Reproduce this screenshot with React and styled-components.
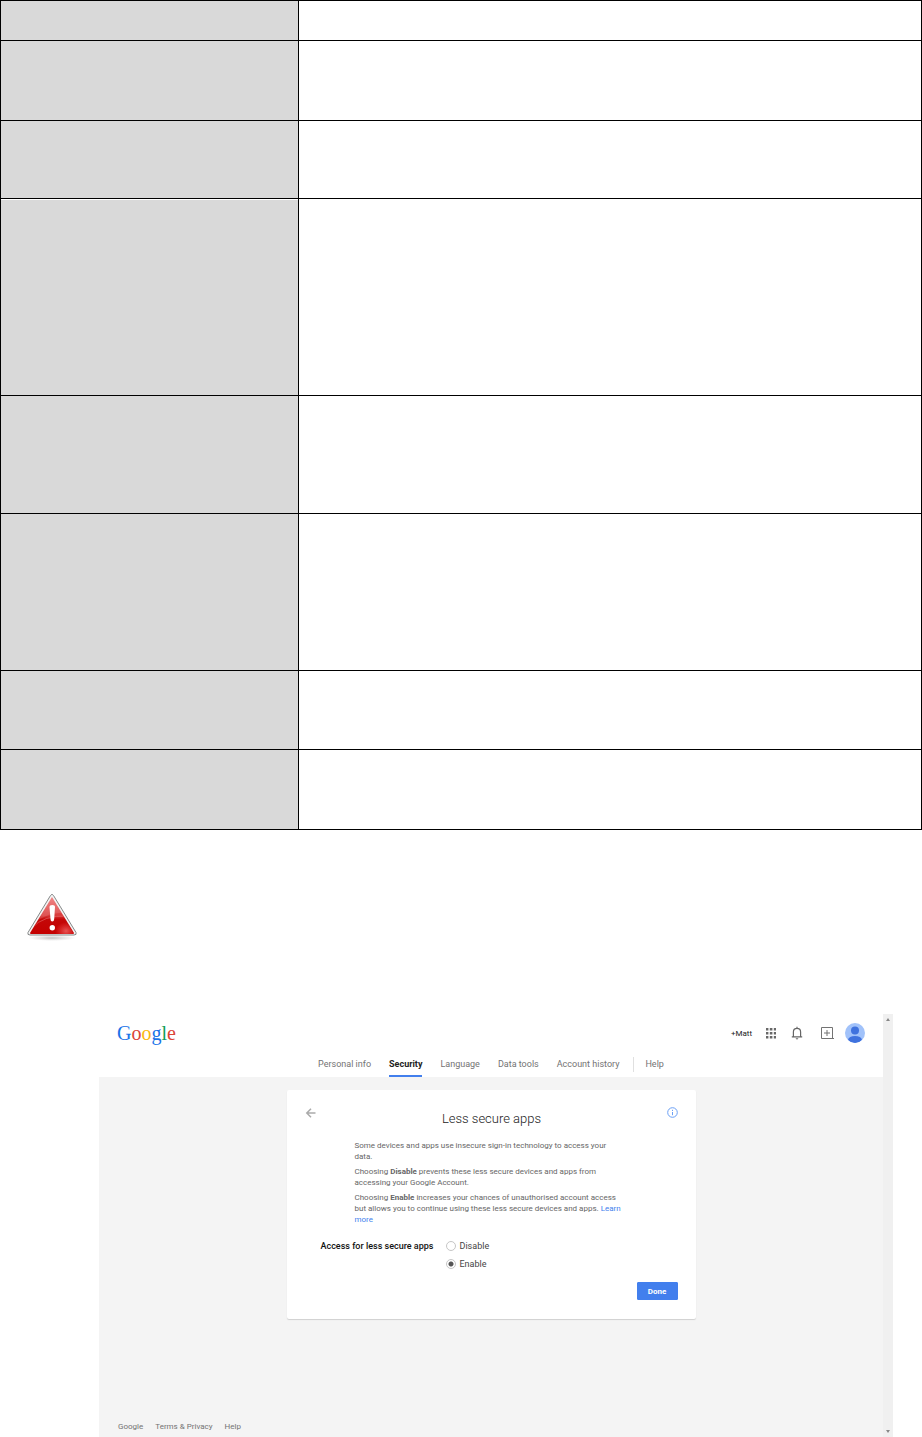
import React, { useState } from "react";
import styled, { createGlobalStyle } from "styled-components";

const GlobalStyle = createGlobalStyle`
  body {
    margin: 0;
    background: #fff;
    font-family: Roboto, "Liberation Sans", sans-serif;
  }
`;

const SettingsTable = styled.table`
  width: 100%;
  border-collapse: collapse;
  table-layout: fixed;
`;

const LabelCol = styled.col`
  width: 298px;
`;

const Cell = styled.td`
  box-sizing: border-box;
  height: ${(props) => props.$height}px;
  padding: 0;
  border: 1px solid #000;
  background: ${(props) => (props.$label ? "#d9d9d9" : "#fff")};
  box-shadow: ${(props) => (props.$highlight ? "inset 0 1px #fff" : "none")};
`;

const Warning = styled.div`
  padding: 63px 0 0 26px;

  svg {
    display: block;
  }
`;

const Browser = styled.section`
  display: flex;
  margin: 71px 29px 0 99px;
`;

const Page = styled.div`
  flex: 1;
  display: flex;
  flex-direction: column;
  min-width: 0;
  background: #f4f4f4;
`;

const Header = styled.header`
  background: #fff;
`;

const TopBar = styled.div`
  display: flex;
  align-items: center;
  justify-content: space-between;
  height: 38px;
  padding: 0 18px;
`;

const Logo = styled.a`
  font-family: "Liberation Serif", serif;
  font-size: 20px;
  line-height: 24px;
  text-decoration: none;
`;

const LogoLetter = styled.span`
  color: ${(props) => props.$color};
`;

const Account = styled.div`
  display: flex;
  align-items: center;
`;

const UserLink = styled.a`
  margin-right: 14px;
  font-size: 8px;
  color: #222;
  text-decoration: none;
`;

const IconButton = styled.button`
  display: flex;
  margin: 0 ${(props) => props.$gap}px 0 0;
  padding: 0;
  border: 0;
  background: none;
`;

const Nav = styled.nav`
  display: flex;
  justify-content: center;
  height: 25px;
`;

const NavLink = styled.a`
  box-sizing: border-box;
  height: 25px;
  margin: 0 9px;
  border-bottom: 2px solid ${(props) => (props.$active ? "#427fed" : "transparent")};
  font-size: 9px;
  line-height: 24px;
  font-weight: ${(props) => (props.$active ? 700 : 400)};
  color: ${(props) => (props.$active ? "#222" : "#737373")};
  text-decoration: none;
`;

const NavDivider = styled.span`
  width: 1px;
  height: 15px;
  margin: 5px 2px 0 5px;
  background: #e0e0e0;
`;

const Card = styled.main`
  box-sizing: border-box;
  width: 409px;
  margin: 13px auto 0;
  padding: 17px 18px 19px;
  border-radius: 2px;
  background: #fff;
  box-shadow: 0 1px 1px rgba(0, 0, 0, 0.15);
`;

const CardHeader = styled.div`
  display: flex;
  align-items: flex-start;
  justify-content: space-between;
`;

const Title = styled.h1`
  margin: 3px 0 0;
  font-size: 13px;
  line-height: 18px;
  font-weight: 300;
  color: #222;
`;

const Description = styled.div`
  width: 280px;
  margin: 12px 0 0 50px;
  font-size: 8px;
  line-height: 11px;
  color: #666;

  p {
    margin: 0 0 4px;
  }

  a {
    color: #427fed;
    text-decoration: none;
  }
`;

const Choice = styled.fieldset`
  display: flex;
  margin: 12px 0 0;
  padding: 0 0 0 16px;
  border: 0;
`;

const ChoiceName = styled.span`
  width: 125px;
  font-size: 9px;
  line-height: 18px;
  font-weight: 500;
  color: #111;
`;

const Option = styled.label`
  display: flex;
  align-items: center;
  height: 18px;
  font-size: 9px;
  color: #444;
`;

const Radio = styled.input`
  appearance: none;
  box-sizing: border-box;
  width: 10px;
  height: 10px;
  margin: 0 4px 0 0;
  border: 1px solid #c6c6c6;
  border-radius: 50%;
  background: #fff;

  &:checked {
    background: radial-gradient(circle, #555 2px, #fff 3px);
  }
`;

const Actions = styled.div`
  display: flex;
  justify-content: flex-end;
  margin-top: 9px;
`;

const DoneButton = styled.button`
  width: 41px;
  height: 18px;
  padding: 0;
  border: 1px solid #427fed;
  border-radius: 1px;
  background: #427fed;
  font-family: inherit;
  font-size: 8px;
  font-weight: 700;
  color: #fff;
`;

const Footer = styled.footer`
  display: flex;
  gap: 12px;
  margin-top: 102px;
  padding: 0 19px 4px;
  font-size: 8px;
  line-height: 12px;

  a {
    color: #737373;
    text-decoration: none;
  }
`;

const ScrollTrack = styled.div`
  display: flex;
  flex-direction: column;
  align-items: center;
  justify-content: space-between;
  box-sizing: border-box;
  width: 10px;
  padding: 4px 0;
  background: #f0f0f0;
`;

const rowHeights = [40, 80, 78, 197, 118, 157, 79, 80];

const logoLetters = [
  ["G", "#1a73e8"],
  ["o", "#db4437"],
  ["o", "#fbb80f"],
  ["g", "#1a73e8"],
  ["l", "#0f9d58"],
  ["e", "#db4437"],
];

function WarningIcon() {
  return (
    <svg width="52" height="50" viewBox="0 0 52 50" role="img" aria-label="Warning">
      <defs>
        <linearGradient id="red" x1="0" y1="0" x2="0" y2="1">
          <stop offset="0" stopColor="#f07878" />
          <stop offset="0.5" stopColor="#d83a3a" />
          <stop offset="0.6" stopColor="#c40808" />
          <stop offset="1" stopColor="#c40000" />
        </linearGradient>
        <linearGradient id="shine" x1="0" y1="0" x2="0" y2="1">
          <stop offset="0" stopColor="#fff" stopOpacity="0.1" />
          <stop offset="1" stopColor="#fff" stopOpacity="0.15" />
        </linearGradient>
        <radialGradient id="shadow">
          <stop offset="0" stopColor="#999" stopOpacity="0.6" />
          <stop offset="1" stopColor="#bbb" stopOpacity="0" />
        </radialGradient>
        <radialGradient id="glow">
          <stop offset="0" stopColor="#ff8a8a" stopOpacity="0.6" />
          <stop offset="1" stopColor="#ff6060" stopOpacity="0" />
        </radialGradient>
        <clipPath id="inside">
          <path d="M26 4L48 41H4Z" />
        </clipPath>
      </defs>
      <ellipse cx="26" cy="45" rx="24" ry="3" fill="url(#shadow)" />
      <path d="M24.500 2.500Q26 0 27.500 2.500L50 39.500Q51 42 48 42H4Q1 42 2 39.500Z" fill="#f4f4f4" stroke="#858888" strokeWidth="1" />
      <path d="M26 4L48 40Q48 41 47 41H5Q4 41 4 40Z" fill="url(#red)" />
      <g clipPath="url(#inside)">
        <path d="M3 36Q18 18 42 20L26 3Z" fill="url(#shine)" />
        <path d="M6 35Q17 22 42 23" fill="none" stroke="#ee8080" strokeOpacity="0.5" />
        <ellipse cx="40" cy="38" rx="11" ry="9" fill="url(#glow)" />
      </g>
      <path d="M23.500 14Q23.500 12 26.300 12T29 14L28.200 26Q28 28.500 26.300 28.500T24.500 26Z" fill="#fff" />
      <circle cx="26.300" cy="34.800" r="2.700" fill="#fff" />
    </svg>
  );
}

function AppsIcon() {
  return (
    <svg width="10" height="11" viewBox="0 0 10 11" fill="#686868">
      {[0, 4, 8].map((y) =>
        [0, 4, 8].map((x) => <rect key={`${x}-${y}`} x={x - 0.2} y={y} width="2.600" height="2.500" />)
      )}
    </svg>
  );
}

function BellIcon() {
  return (
    <svg width="12" height="14" viewBox="0 0 12 14" fill="none" stroke="#666" strokeWidth="1.200">
      <path d="M.8 10.800H11.200M2.400 10.500V6Q2.400 2.400 6 2.400T9.600 6V10.500M6 2.400V.8" />
      <path d="M4.500 12.200H7.500L6 13.800Z" fill="#666" stroke="none" />
    </svg>
  );
}

function ShareIcon() {
  return (
    <svg width="13" height="12" viewBox="0 0 13 12" fill="none" stroke="#737373">
      <path d="M.5 .5H11.500V11.500H.5ZM6 3V9M3 6H9" />
      <path d="M11 11.500H13" />
    </svg>
  );
}

function Avatar() {
  return (
    <svg width="20" height="20" viewBox="0 0 20 20">
      <defs>
        <clipPath id="face">
          <circle cx="10" cy="10" r="10" />
        </clipPath>
      </defs>
      <g clipPath="url(#face)">
        <rect width="20" height="20" fill="#a1c2fa" />
        <circle cx="10" cy="7.500" r="4" fill="#3f72de" />
        <ellipse cx="10" cy="16.500" rx="6.800" ry="3.600" fill="#3f72de" />
      </g>
    </svg>
  );
}

export default function App() {
  const [access, setAccess] = useState("Enable");

  return (
    <>
      <GlobalStyle />
      <SettingsTable>
        <colgroup>
          <LabelCol />
          <col />
        </colgroup>
        <tbody>
          {rowHeights.map((height, i) => (
            <tr key={i}>
              <Cell $label $height={height} $highlight={i === 3} />
              <Cell $height={height} />
            </tr>
          ))}
        </tbody>
      </SettingsTable>

      <Warning>
        <WarningIcon />
      </Warning>

      <Browser>
        <Page>
          <Header>
            <TopBar>
              <Logo href="#home">
                {logoLetters.map(([letter, color], i) => (
                  <LogoLetter key={i} $color={color}>{letter}</LogoLetter>
                ))}
              </Logo>
              <Account>
                <UserLink href="#profile">+Matt</UserLink>
                <IconButton $gap={15} aria-label="Apps"><AppsIcon /></IconButton>
                <IconButton $gap={18} aria-label="Notifications"><BellIcon /></IconButton>
                <IconButton $gap={11} aria-label="Share"><ShareIcon /></IconButton>
                <IconButton $gap={0} aria-label="Account"><Avatar /></IconButton>
              </Account>
            </TopBar>
            <Nav>
              <NavLink href="#personal">Personal info</NavLink>
              <NavLink href="#security" $active>Security</NavLink>
              <NavLink href="#language">Language</NavLink>
              <NavLink href="#data">Data tools</NavLink>
              <NavLink href="#history">Account history</NavLink>
              <NavDivider />
              <NavLink href="#help">Help</NavLink>
            </Nav>
          </Header>

          <Card>
            <CardHeader>
              <IconButton $gap={0} aria-label="Back">
                <svg width="12" height="12" viewBox="0 0 12 12" fill="none" stroke="#aaa" strokeWidth="1.500">
                  <path d="M10.500 6H2M6 1.800L1.800 6L6 10.200" />
                </svg>
              </IconButton>
              <Title>Less secure apps</Title>
              <IconButton $gap={0} aria-label="Information">
                <svg width="11" height="11" viewBox="0 0 11 11" fill="none" stroke="#6a9ff5">
                  <circle cx="5.500" cy="5.500" r="4.800" />
                  <path d="M5.500 5V8.200M5.500 2.800V4" />
                </svg>
              </IconButton>
            </CardHeader>
            <Description>
              <p>
                Some devices and apps use insecure sign-in technology to access your
                <br />
                data.
              </p>
              <p>
                Choosing <b>Disable</b> prevents these less secure devices and apps from
                <br />
                accessing your Google Account.
              </p>
              <p>
                Choosing <b>Enable</b> increases your chances of unauthorised account access
                <br />
                but allows you to continue using these less secure devices and apps.{" "}
                <a href="#learn">
                  Learn
                  <br />
                  more
                </a>
              </p>
            </Description>
            <Choice aria-labelledby="access-name">
              <ChoiceName id="access-name">Access for less secure apps</ChoiceName>
              <div>
                {["Disable", "Enable"].map((value) => (
                  <Option key={value}>
                    <Radio
                      type="radio"
                      name="access"
                      value={value}
                      checked={access === value}
                      onChange={() => setAccess(value)}
                    />
                    {value}
                  </Option>
                ))}
              </div>
            </Choice>
            <Actions>
              <DoneButton type="button">Done</DoneButton>
            </Actions>
          </Card>

          <Footer>
            <a href="#google">Google</a>
            <a href="#terms">Terms &amp; Privacy</a>
            <a href="#help">Help</a>
          </Footer>
        </Page>
        <ScrollTrack>
          <svg width="4" height="3" viewBox="0 0 4 3" fill="#888"><path d="M2 0L4 3H0Z" /></svg>
          <svg width="4" height="3" viewBox="0 0 4 3" fill="#888"><path d="M0 0H4L2 3Z" /></svg>
        </ScrollTrack>
      </Browser>
    </>
  );
}
